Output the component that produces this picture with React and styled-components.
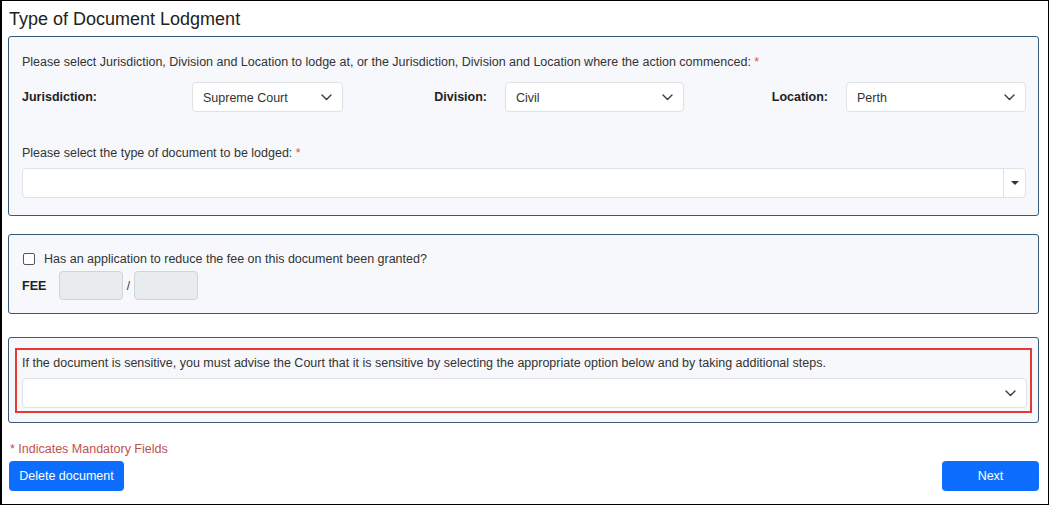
import React from "react";
import styled, { createGlobalStyle } from "styled-components";

const Global = createGlobalStyle`
  html, body { margin: 0; padding: 0; background: #fff; }
  body { font-family: "Liberation Sans", Arial, sans-serif; color: #333; }
  * { box-sizing: border-box; }
`;

const Frame = styled.div`
  width: 1049px;
  height: 505px;
  border: 1px solid #000;
  border-left-width: 2px;
  padding: 6px 9px 0 6px;
  display: flex;
  flex-direction: column;
  overflow: hidden;
  & > * { flex-shrink: 0; }
`;

const Title = styled.h1`
  margin: 0 0 5px 1px;
  font-size: 18px;
  line-height: 24px;
  font-weight: 400;
  color: #222;
`;

const Panel = styled.section`
  border: 1px solid #3a5878;
  border-radius: 3px;
  background: #f7f8fc;
  margin-top: ${(p) => p.$mt || 0}px;
  padding: ${(p) => p.$pad};
  display: flex;
  flex-direction: column;
`;

const Text = styled.div`
  font-size: 12.5px;
  line-height: 16px;
  color: #333;
  margin-top: ${(p) => p.$mt || 0}px;
`;

const Req = styled.span`
  color: #d9534f;
`;

const FieldRow = styled.div`
  display: grid;
  grid-template-columns: 170px 151px 1fr 179px 1fr 180px;
  align-items: center;
  margin-top: 12px;
  height: 30px;
`;

const Label = styled.label`
  font-size: 12.5px;
  font-weight: 700;
  color: #222;
  text-align: ${(p) => (p.$right ? "right" : "left")};
  padding-right: ${(p) => (p.$right ? "18px" : "0")};
`;

const SelectBox = styled.div`
  height: 30px;
  border: 1px solid #dee2e6;
  border-radius: 4px;
  background: #fff;
  display: flex;
  align-items: center;
  justify-content: space-between;
  padding: 1px 10px 0 10px;
  font-size: 12.5px;
  color: #333;
  margin-top: ${(p) => p.$mt || 0}px;
`;

const Combo = styled.div`
  height: 30px;
  border: 1px solid #dee2e6;
  border-radius: 4px;
  background: #fff;
  display: flex;
  margin-top: 7px;
`;

const ComboInput = styled.div`
  flex: 1;
`;

const ComboButton = styled.div`
  width: 22px;
  border-left: 1px solid #dee2e6;
  display: flex;
  align-items: center;
  justify-content: center;
`;

const Caret = styled.span`
  width: 0;
  height: 0;
  border-left: 4px solid transparent;
  border-right: 4px solid transparent;
  border-top: 4px solid #333;
`;

const CheckLine = styled.label`
  display: flex;
  align-items: center;
  gap: 9px;
  font-size: 12.5px;
  line-height: 16px;
  color: #333;
`;

const CheckBox = styled.span`
  width: 12px;
  height: 12px;
  border: 1px solid #555;
  border-radius: 2px;
  background: #fff;
  margin-left: 1px;
`;

const FeeRow = styled.div`
  display: flex;
  align-items: center;
  margin-top: 4px;
`;

const FeeLabel = styled.span`
  font-size: 12.5px;
  font-weight: 700;
  color: #222;
  width: 37px;
`;

const FeeInput = styled.div`
  width: 64px;
  height: 29px;
  border: 1px solid #ced4da;
  border-radius: 4px;
  background: #e9ecef;
`;

const Slash = styled.span`
  font-size: 12px;
  color: #333;
  width: 11px;
  text-align: center;
`;

const Highlight = styled.div`
  border: 2px solid #e53935;
  padding: 5px 3px 3px 5px;
  display: flex;
  flex-direction: column;
`;

const Mandatory = styled.div`
  font-size: 12.5px;
  line-height: 16px;
  color: #c0504d;
  margin: 18px 0 0 2px;
`;

const Actions = styled.div`
  display: flex;
  justify-content: space-between;
  margin-top: 4px;
  padding-left: 1px;
`;

const Button = styled.button`
  height: 30px;
  width: ${(p) => p.$w}px;
  border: none;
  border-radius: 4px;
  background: #0d6efd;
  color: #fff;
  font-family: "Liberation Sans", Arial, sans-serif;
  font-size: 12.5px;
  padding: 0;
  cursor: pointer;
`;

const Chevron = () => (
  <svg width="11" height="7" viewBox="0 0 11 7" fill="none">
    <path d="M1 1 L5.5 5.5 L10 1" stroke="#343a40" strokeWidth="1.4" strokeLinecap="round" strokeLinejoin="round" />
  </svg>
);

const Select = ({ value, mt }) => (
  <SelectBox $mt={mt}>
    <span>{value}</span>
    <Chevron />
  </SelectBox>
);

export default function App() {
  return (
    <>
      <Global />
      <Frame>
        <Title>Type of Document Lodgment</Title>
        <Panel $pad="17px 12px 17px 13px">
          <Text>
            Please select Jurisdiction, Division and Location to lodge at, or the Jurisdiction, Division and Location where the action commenced: <Req>*</Req>
          </Text>
          <FieldRow>
            <Label>Jurisdiction:</Label>
            <Select value="Supreme Court" />
            <Label $right>Division:</Label>
            <Select value="Civil" />
            <Label $right>Location:</Label>
            <Select value="Perth" />
          </FieldRow>
          <Text $mt={33}>
            Please select the type of document to be lodged: <Req>*</Req>
          </Text>
          <Combo>
            <ComboInput />
            <ComboButton>
              <Caret />
            </ComboButton>
          </Combo>
        </Panel>
        <Panel $mt={18} $pad="16px 12px 13px 13px">
          <CheckLine>
            <CheckBox />
            Has an application to reduce the fee on this document been granted?
          </CheckLine>
          <FeeRow>
            <FeeLabel>FEE</FeeLabel>
            <FeeInput />
            <Slash>/</Slash>
            <FeeInput />
          </FeeRow>
        </Panel>
        <Panel $mt={23} $pad="10px 6px 9px 6px">
          <Highlight>
            <Text>
              If the document is sensitive, you must advise the Court that it is sensitive by selecting the appropriate option below and by taking additional steps.
            </Text>
            <Select value="" mt={7} />
          </Highlight>
        </Panel>
        <Mandatory>* Indicates Mandatory Fields</Mandatory>
        <Actions>
          <Button $w={115}>Delete document</Button>
          <Button $w={97}>Next</Button>
        </Actions>
      </Frame>
    </>
  );
}
